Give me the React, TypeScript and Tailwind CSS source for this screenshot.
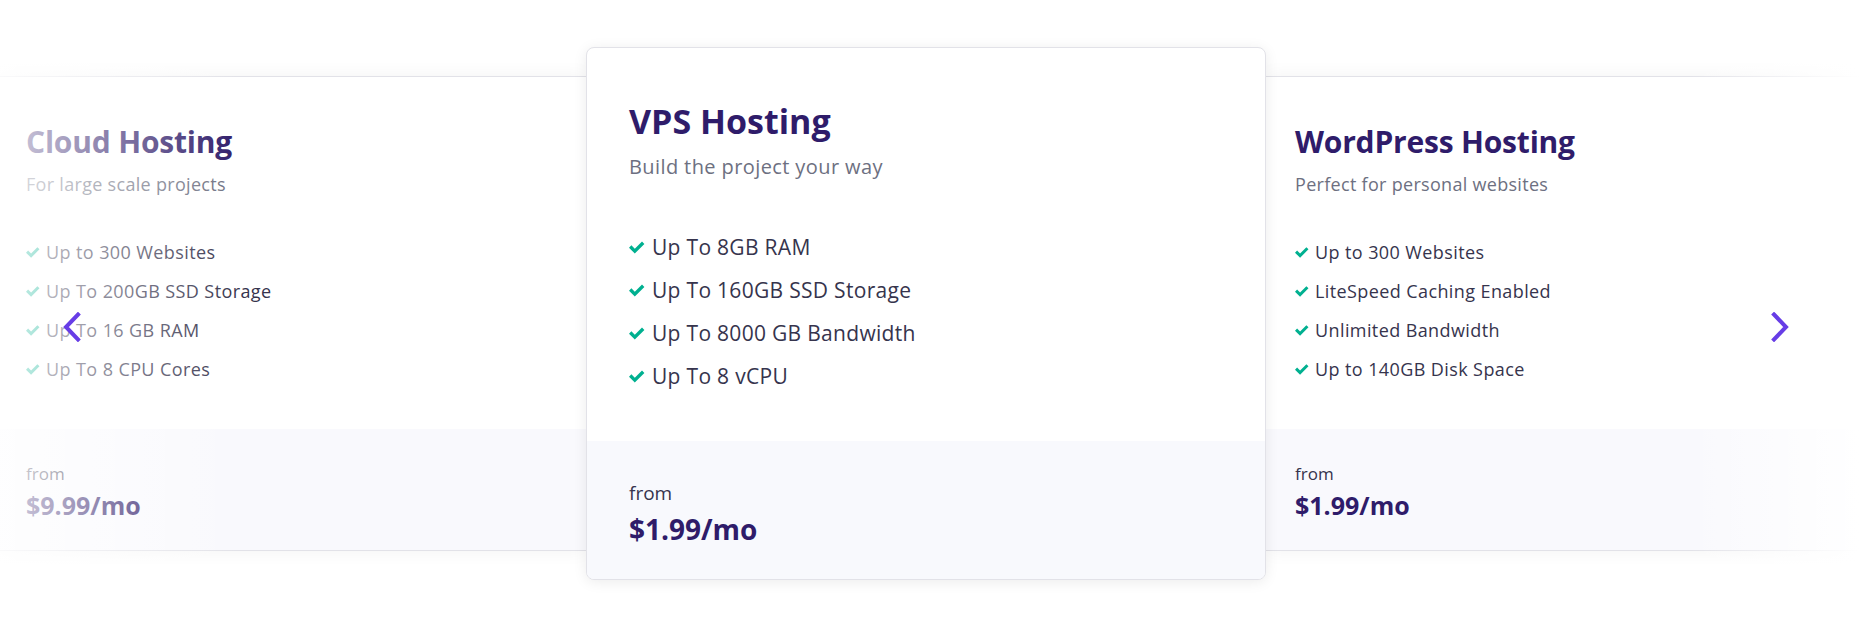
import React from 'react'

type Plan = {
  title: string
  subtitle: string
  features: string[]
  price: string
}

const plans: Plan[] = [
  {
    title: 'Cloud Hosting',
    subtitle: 'For large scale projects',
    features: ['Up to 300 Websites', 'Up To 200GB SSD Storage', 'Up To 16 GB RAM', 'Up To 8 CPU Cores'],
    price: '$9.99/mo',
  },
  {
    title: 'VPS Hosting',
    subtitle: 'Build the project your way',
    features: ['Up To 8GB RAM', 'Up To 160GB SSD Storage', 'Up To 8000 GB Bandwidth', 'Up To 8 vCPU'],
    price: '$1.99/mo',
  },
  {
    title: 'WordPress Hosting',
    subtitle: 'Perfect for personal websites',
    features: ['Up to 300 Websites', 'LiteSpeed Caching Enabled', 'Unlimited Bandwidth', 'Up to 140GB Disk Space'],
    price: '$1.99/mo',
  },
]

function Check({ className }: { className?: string }) {
  return (
    <svg viewBox="0 0 16 12" className={className} fill="#00b090">
      <path d="M5.8 12 0 6.2 2.4 3.8 5.8 7.2 13 0 15.4 2.4Z" />
    </svg>
  )
}

function SideCard({ plan, pad }: { plan: Plan; pad: string }) {
  return (
    <div className="flex h-[475px] flex-col border-y border-[#e2e2e8] bg-white shadow-[0_0_18px_rgba(0,0,0,0.05)]">
      <div className={`flex-1 pt-[46px] ${pad}`}>
        <h3 className="text-[30px] leading-[38px] font-bold tracking-[-0.2px] text-[#2f1c6a]">{plan.title}</h3>
        <p className="mt-[11px] text-[18px] leading-[24px] tracking-[0.3px] text-[#6d7081]">{plan.subtitle}</p>
        <ul className="mt-[44px] flex flex-col gap-[15px]">
          {plan.features.map((f) => (
            <li key={f} className="flex items-center gap-[6px] text-[18px] leading-[24px] tracking-[0.4px] text-[#36344d]">
              <Check className="h-[11px] w-[14px]" />
              {f}
            </li>
          ))}
        </ul>
      </div>
      <div className={`h-[121px] bg-[#f9f9fd] pt-[33px] ${pad}`}>
        <p className="text-[17px] leading-[24px] text-[#36344d]">from</p>
        <p className="mt-[3px] text-[25px] leading-[32px] font-bold text-[#2f1c6a]">{plan.price}</p>
      </div>
    </div>
  )
}

function FeaturedCard({ plan }: { plan: Plan }) {
  return (
    <div className="relative z-10 flex h-[533px] w-[680px] shrink-0 flex-col overflow-hidden rounded-lg border border-[#e2e2e8] bg-white shadow-[0_2px_14px_rgba(0,0,0,0.08)]">
      <div className="flex-1 px-[42px] pt-[52px]">
        <h3 className="text-[34px] leading-[42px] font-bold text-[#2f1c6a]">{plan.title}</h3>
        <p className="mt-[11px] text-[20px] leading-[28px] tracking-[0.4px] text-[#6d7081]">{plan.subtitle}</p>
        <ul className="mt-[52px] flex flex-col gap-[15px]">
          {plan.features.map((f) => (
            <li key={f} className="flex items-center gap-[7px] text-[21px] leading-[28px] tracking-[0.3px] text-[#36344d]">
              <Check className="h-[13px] w-[16px]" />
              {f}
            </li>
          ))}
        </ul>
      </div>
      <div className="h-[138px] bg-[#f8f9fd] px-[42px] pt-[38px]">
        <p className="text-[19px] leading-[28px] text-[#36344d]">from</p>
        <p className="mt-[4px] text-[28px] leading-[36px] font-bold text-[#2f1c6a]">{plan.price}</p>
      </div>
    </div>
  )
}

function Arrow({ dir, className }: { dir: 'left' | 'right'; className: string }) {
  return (
    <button className={`absolute top-[312px] h-[30px] w-[19px] ${className}`} aria-label={dir === 'left' ? 'Previous' : 'Next'}>
      <svg viewBox="0 0 19 30" className="h-full w-full" fill="none" stroke="#673de6" strokeWidth="4" strokeLinecap="square">
        {dir === 'left' ? <path d="M16 2.5 4 15l12 12.5" /> : <path d="M3 2.5 15 15 3 27.5" />}
      </svg>
    </button>
  )
}

export default function App() {
  return (
    <div className="relative h-[632px] w-full overflow-hidden bg-white font-['Open_Sans',sans-serif]">
      <div className="flex items-start pt-[47px]">
        <div className="mt-[29px] w-[586px] shrink-0">
          <SideCard plan={plans[0]} pad="pl-[26px]" />
        </div>
        <FeaturedCard plan={plans[1]} />
        <div className="mt-[29px] min-w-0 flex-1">
          <SideCard plan={plans[2]} pad="pl-[29px]" />
        </div>
      </div>

      <div className="pointer-events-none absolute top-0 left-0 h-full w-[240px] bg-linear-to-r from-white/80 to-white/0" />
      <div className="pointer-events-none absolute top-0 right-0 h-full w-[170px] bg-linear-to-l from-white to-white/0" />

      <Arrow dir="left" className="left-[62px]" />
      <Arrow dir="right" className="left-[1771px]" />
    </div>
  )
}
